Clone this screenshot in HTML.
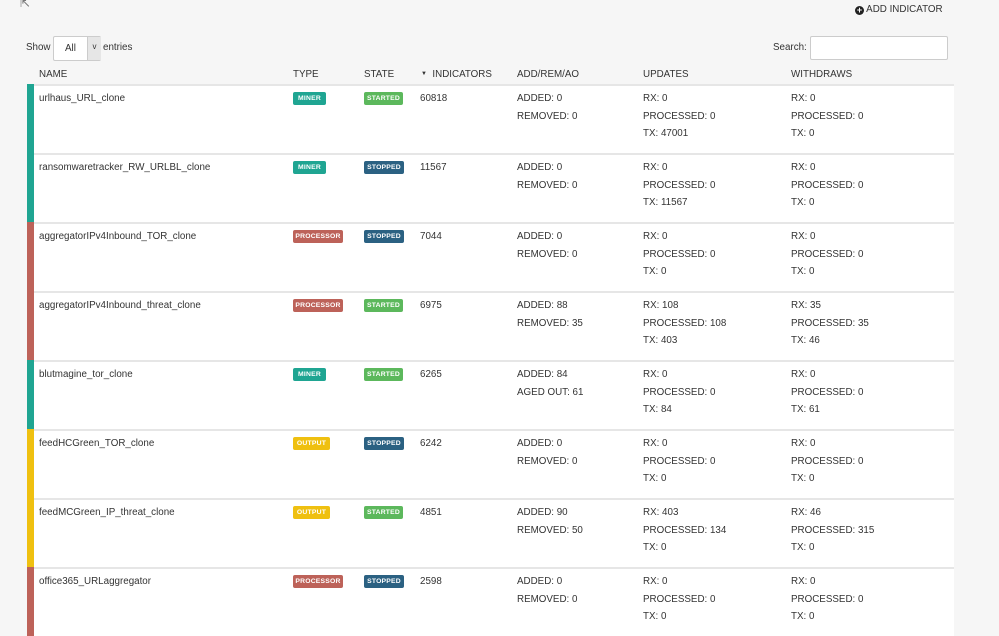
<!DOCTYPE html>
<html><head><style>
body{margin:0;width:999px;height:634px;background:#f6f6f6;font-family:"Liberation Sans",sans-serif;color:#333;font-size:9.8px;position:relative;overflow:hidden}
.a{position:absolute;white-space:nowrap}
.row{position:absolute;left:27px;width:927px;height:67px;background:#fff;border-top:2px solid #e6e6e6}
.bar{position:absolute;left:0;top:-2px;width:7px;height:69px}
.b{position:absolute;top:6px;height:13px;display:flex;align-items:center;justify-content:center;font-size:6.8px;font-weight:bold;color:#fff;border-radius:2px;letter-spacing:.2px}
.c{position:absolute;top:4px;line-height:17.5px;font-size:9.8px}
.h{position:absolute;top:69px;font-size:9.8px}
</style></head><body>
<div class="a" style="left:20px;top:-4px;font-size:12px;color:#777">⇱</div>
<div class="a" style="left:855px;top:4px;font-size:9.8px"><span style="display:inline-block;width:9px;height:9px;border-radius:50%;background:#222;color:#fff;font-size:9px;line-height:9px;text-align:center;font-weight:bold;vertical-align:-1px">+</span> ADD INDICATOR</div>
<div class="a" style="left:26px;top:42px">Show</div>
<div class="a" style="left:53px;top:36px;width:46px;height:23px;border:1px solid #ccc;border-radius:2px;background:#fff"><span class="a" style="left:11px;top:6px">All</span><span class="a" style="left:33px;top:0;width:13px;height:23px;background:#e6e6e6;border-left:1px solid #ccc;text-align:center;line-height:20px;font-size:8px">v</span></div>
<div class="a" style="left:103px;top:42px">entries</div>
<div class="a" style="left:773px;top:42px">Search:</div>
<div class="a" style="left:810px;top:36px;width:136px;height:22px;border:1px solid #ccc;border-radius:2px;background:#fff"></div>
<div class="a h" style="left:39px">NAME</div>
<div class="a h" style="left:293px">TYPE</div>
<div class="a h" style="left:364px">STATE</div>
<div class="a h" style="left:421px"><span style="font-size:6px;vertical-align:2px">▼</span>&nbsp; INDICATORS</div>
<div class="a h" style="left:517px">ADD/REM/AO</div>
<div class="a h" style="left:643px">UPDATES</div>
<div class="a h" style="left:791px">WITHDRAWS</div>
<div id="t"></div>
<script>
var M=['MINER','#1fa592',33],P=['PROCESSOR','#bd6259',50],O=['OUTPUT','#efc010',37];
var S=['STARTED','#5cb85c',39],T=['STOPPED','#2b6182',40];
var R=[
['urlhaus_URL_clone',M,S,'60818',['ADDED: 0','REMOVED: 0'],['RX: 0','PROCESSED: 0','TX: 47001'],['RX: 0','PROCESSED: 0','TX: 0']],
['ransomwaretracker_RW_URLBL_clone',M,T,'11567',['ADDED: 0','REMOVED: 0'],['RX: 0','PROCESSED: 0','TX: 11567'],['RX: 0','PROCESSED: 0','TX: 0']],
['aggregatorIPv4Inbound_TOR_clone',P,T,'7044',['ADDED: 0','REMOVED: 0'],['RX: 0','PROCESSED: 0','TX: 0'],['RX: 0','PROCESSED: 0','TX: 0']],
['aggregatorIPv4Inbound_threat_clone',P,S,'6975',['ADDED: 88','REMOVED: 35'],['RX: 108','PROCESSED: 108','TX: 403'],['RX: 35','PROCESSED: 35','TX: 46']],
['blutmagine_tor_clone',M,S,'6265',['ADDED: 84','AGED OUT: 61'],['RX: 0','PROCESSED: 0','TX: 84'],['RX: 0','PROCESSED: 0','TX: 61']],
['feedHCGreen_TOR_clone',O,T,'6242',['ADDED: 0','REMOVED: 0'],['RX: 0','PROCESSED: 0','TX: 0'],['RX: 0','PROCESSED: 0','TX: 0']],
['feedMCGreen_IP_threat_clone',O,S,'4851',['ADDED: 90','REMOVED: 50'],['RX: 403','PROCESSED: 134','TX: 0'],['RX: 46','PROCESSED: 315','TX: 0']],
['office365_URLaggregator',P,T,'2598',['ADDED: 0','REMOVED: 0'],['RX: 0','PROCESSED: 0','TX: 0'],['RX: 0','PROCESSED: 0','TX: 0']]];
var h='';R.forEach(function(r,i){var y=84+i*69;
h+='<div class="row" style="top:'+y+'px"><div class="bar" style="background:'+r[1][1]+'"></div>'+
'<div class="c" style="left:12px">'+r[0]+'</div>'+
'<div class="b" style="left:266px;width:'+r[1][2]+'px;background:'+r[1][1]+'">'+r[1][0]+'</div>'+
'<div class="b" style="left:337px;width:'+r[2][2]+'px;background:'+r[2][1]+'">'+r[2][0]+'</div>'+
'<div class="c" style="left:393px">'+r[3]+'</div>'+
'<div class="c" style="left:490px">'+r[4].join('<br>')+'</div>'+
'<div class="c" style="left:616px">'+r[5].join('<br>')+'</div>'+
'<div class="c" style="left:764px">'+r[6].join('<br>')+'</div></div>';});
document.getElementById('t').innerHTML=h;
</script>
</body></html>
